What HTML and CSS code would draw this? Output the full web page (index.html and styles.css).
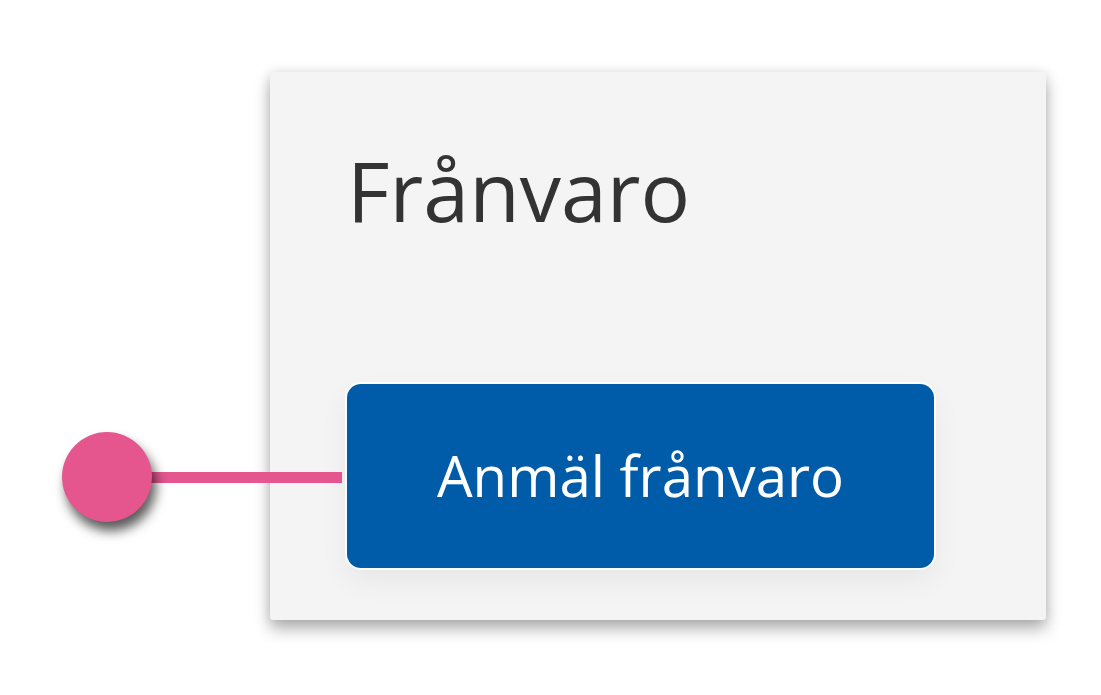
FILE: index.html
```html
<!DOCTYPE html>
<html>
<head>
    <meta charset="UTF-8" />
    <title>Frånvaro</title>
    <link rel="stylesheet" href="styles.css">
</head>
<body>
    <div class="stage">
        <div class="card">
            <h1 class="card-title">Frånvaro</h1>
            <button class="report-btn">Anmäl frånvaro</button>
        </div>

        <!-- annotation marker pointing at the button -->
        <div class="marker">
            <div class="marker-line"></div>
            <div class="marker-dot"></div>
        </div>
    </div>
</body>
</html>
```

FILE: styles.css
```css
* {
    margin: 0;
    padding: 0;
    box-sizing: border-box;
}
body {
    font-family: "Open Sans", "Noto Sans", sans-serif;
    background-color: white;
}
.stage {
    position: relative;
    width: 1101px;
    height: 695px;
    padding: 72px 0 0 270px;
}
.card {
    width: 776px;
    height: 548px;
    padding: 62px 0 0 77px;
    background-color: #f4f4f4;
    border-radius: 3px;
    box-shadow: 0 9px 16px rgba(0, 0, 0, 0.3), 0 0 12px rgba(0, 0, 0, 0.1);
    display: flex;
    flex-direction: column;
}
.card-title {
    font-size: 82.5px;
    font-weight: 400;
    color: #333333;
    line-height: 1.362;
}
.report-btn {
    margin-top: 138px;
    width: 587px;
    height: 184px;
    border: none;
    border-radius: 14px;
    background-color: #005ca9;
    color: white;
    font-family: "Open Sans", "Noto Sans", sans-serif;
    font-size: 56.4px;
    line-height: 1.362;
    box-shadow: 0 0 0 2px rgba(255, 255, 255, 0.8), 0 12px 30px rgba(0, 0, 0, 0.06);
    display: flex;
    align-items: center;
    justify-content: center;
}
.marker {
    position: absolute;
    left: 62px;
    top: 432px;
    width: 280px;
    height: 90px;
}
.marker-line {
    position: absolute;
    left: 40px;
    top: 40px;
    width: 240px;
    height: 11px;
    background-color: #e5568f;
}
.marker-dot {
    position: absolute;
    left: 0;
    top: 0;
    width: 90px;
    height: 90px;
    border-radius: 50%;
    background-color: #e5568f;
    box-shadow: 4px 9px 12px rgba(0, 0, 0, 0.65);
}
```
